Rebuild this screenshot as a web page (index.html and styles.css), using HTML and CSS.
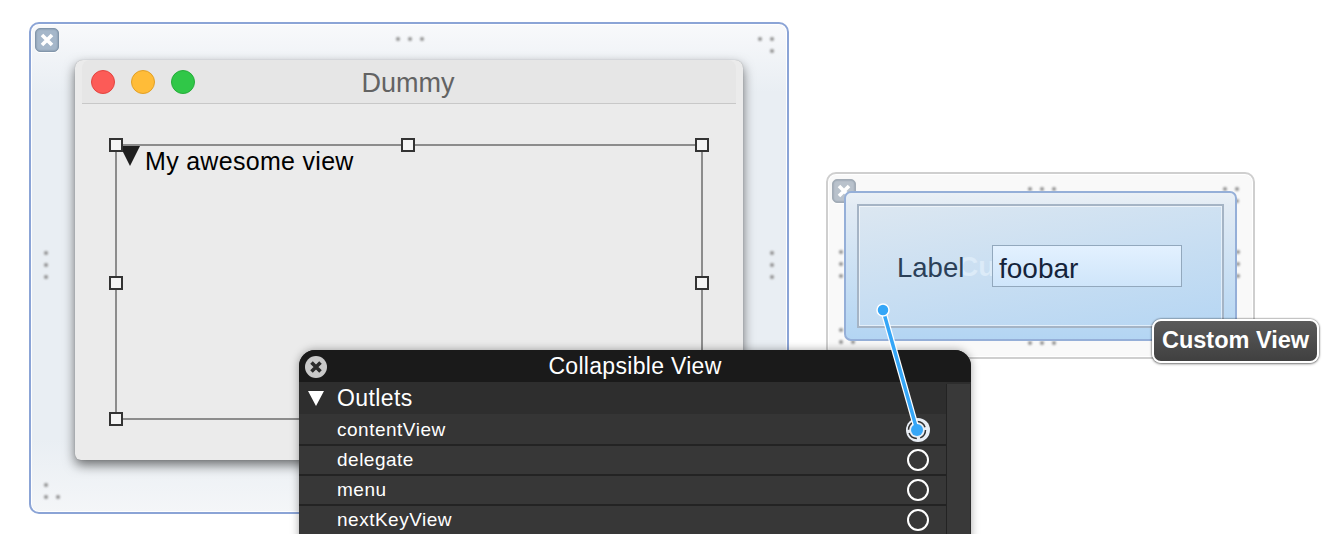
FILE: index.html
```html
<!DOCTYPE html>
<html lang="en">
<head>
  <meta charset="UTF-8">
  <title>Collapsible View - Interface Builder</title>
  <link rel="stylesheet" href="styles.css">
</head>
<body>
  <div class="canvas">

    <!-- main object frame -->
    <div class="frame frame-main">
      <svg class="grips grips-main" width="758" height="490" viewBox="0 0 758 490">
        <circle cx="368" cy="15" r="2"/><circle cx="380" cy="15" r="2"/><circle cx="392" cy="15" r="2"/>
        <circle cx="730" cy="15" r="2"/><circle cx="742" cy="15" r="2"/><circle cx="742" cy="27" r="2"/>
        <circle cx="16" cy="229" r="2"/><circle cx="16" cy="241" r="2"/><circle cx="16" cy="253" r="2"/>
        <circle cx="742" cy="229" r="2"/><circle cx="742" cy="241" r="2"/><circle cx="742" cy="253" r="2"/>
        <circle cx="16" cy="461" r="2"/><circle cx="16" cy="473" r="2"/><circle cx="28" cy="473" r="2"/>
      </svg>
      <div class="close-box close-main">
        <svg width="16" height="16" viewBox="0 0 16 16"><path d="M3 3l10 10M13 3l-10 10"/></svg>
      </div>

      <div class="window">
        <div class="titlebar">
          <span class="light light-red"></span>
          <span class="light light-yellow"></span>
          <span class="light light-green"></span>
          <span class="window-title">Dummy</span>
        </div>
        <div class="selection">
          <span class="handle h-tl"></span>
          <span class="handle h-tc"></span>
          <span class="handle h-tr"></span>
          <span class="handle h-ml"></span>
          <span class="handle h-mr"></span>
          <span class="handle h-bl"></span>
          <span class="handle h-bc"></span>
          <span class="handle h-br"></span>
          <div class="disclosure">
            <span class="triangle"></span>
            <span class="disclosure-text">My awesome view</span>
          </div>
        </div>
      </div>
    </div>

    <!-- custom view frame -->
    <div class="frame frame-custom">
      <svg class="grips grips-custom" width="427" height="185" viewBox="0 0 427 185">
        <circle cx="203" cy="16" r="2"/><circle cx="215" cy="16" r="2"/><circle cx="227" cy="16" r="2"/>
        <circle cx="398" cy="16" r="2"/><circle cx="410" cy="16" r="2"/><circle cx="410" cy="28" r="2"/>
        <circle cx="14" cy="79" r="2"/><circle cx="14" cy="91" r="2"/><circle cx="14" cy="103" r="2"/>
        <circle cx="411" cy="79" r="2"/><circle cx="411" cy="91" r="2"/><circle cx="411" cy="103" r="2"/>
        <circle cx="14" cy="157" r="2"/><circle cx="14" cy="169" r="2"/><circle cx="26" cy="169" r="2"/>
        <circle cx="203" cy="170" r="2"/><circle cx="215" cy="170" r="2"/><circle cx="227" cy="170" r="2"/>
      </svg>
      <div class="close-box close-custom">
        <svg width="16" height="16" viewBox="0 0 16 16"><path d="M3 3l10 10M13 3l-10 10"/></svg>
      </div>
      <div class="drag-frame">
        <div class="custom-view">
          <span class="ghost-text">Custom</span>
          <span class="custom-label">Label</span>
          <span class="custom-field">foobar</span>
        </div>
      </div>
    </div>

    <div class="tooltip">Custom View</div>

    <!-- outlets panel -->
    <div class="hud">
      <div class="hud-title">
        <span class="hud-close">
          <svg width="14" height="14" viewBox="0 0 14 14"><path d="M2.5 2.5l9 9M11.5 2.5l-9 9"/></svg>
        </span>
        Collapsible View
      </div>
      <div class="hud-body">
        <div class="hud-list">
          <div class="hud-group"><span class="triangle triangle-white"></span>Outlets</div>
          <div class="hud-row hud-row-first"><span>contentView</span><span class="socket socket-on"></span></div>
          <div class="hud-row"><span>delegate</span><span class="socket"></span></div>
          <div class="hud-row"><span>menu</span><span class="socket"></span></div>
          <div class="hud-row"><span>nextKeyView</span><span class="socket"></span></div>
        </div>
        <div class="hud-scroll"></div>
      </div>
    </div>

    <!-- connection wire, from the custom view to the outlet -->
    <svg class="wire" width="1322" height="534" viewBox="0 0 1322 534">
      <circle class="wire-ring" cx="917" cy="430" r="8.5"/>
      <line class="wire-edge" x1="883" y1="310" x2="917" y2="430"/>
      <line class="wire-core" x1="883" y1="310" x2="917" y2="430"/>
      <circle class="wire-start" cx="883" cy="310" r="6"/>
      <circle class="wire-end" cx="917" cy="430" r="6"/>
    </svg>

  </div>
</body>
</html>
```

FILE: styles.css
```css
html, body { margin: 0; padding: 0; background: #fff; }
body { font-family: "Liberation Sans", Arial, sans-serif; }
.canvas { position: relative; width: 1322px; height: 534px; overflow: hidden; background: #fff; }

/* object frames on the canvas */
.frame { position: absolute; box-sizing: border-box; border-radius: 10px; }
.frame-main { left: 29px; top: 22px; width: 760px; height: 492px; border: 2px solid #8ba4d6; background: linear-gradient(180deg, #f8f9fb 0, #e9eef3 14%, #e9eef3 85%, #f4f6f8 100%); box-shadow: inset 0 0 0 1px #fff; }
.frame-custom { left: 826px; top: 172px; width: 429px; height: 187px; border: 2px solid #cfcfcf; background: #f9f9f9; box-shadow: inset 0 0 0 1px #fff; }
.grips { position: absolute; filter: blur(0.8px); }
.grips-main { left: -1px; top: 0; }
.grips-custom { left: -1px; top: -1px; }
.grips circle { fill: #8f8f8f; }

.close-box { position: absolute; box-sizing: border-box; width: 24px; height: 24px; border-radius: 5px; border: 1px solid #8296ab; background: #a5b7ca; box-shadow: inset 0 0 2px rgba(70,90,110,0.6), 0 1px 0 #fff; display: flex; align-items: center; justify-content: center; }
.close-box path { stroke: #fff; stroke-width: 3.6; fill: none; }
.close-main { left: 4px; top: 4px; }
.close-custom { left: 4px; top: 5px; background: #b9c2cc; border-color: #a3acb6; }

/* the dummy window */
.window { position: absolute; left: 44px; top: 36px; width: 668px; height: 400px; background: #ebebeb; border-radius: 8px 8px 6px 6px; box-shadow: 0 5px 12px rgba(0,0,0,0.55), 0 0 1px rgba(0,0,0,0.3); }
.titlebar { position: relative; display: flex; align-items: center; gap: 16px; box-sizing: border-box; height: 44px; padding: 0 0 0 9px; margin: 0 7px; background: #e6e6e6; border-bottom: 1px solid #c8c8c8; border-radius: 8px 8px 0 0; }
.light { box-sizing: border-box; width: 24px; height: 24px; border-radius: 50%; border: 1px solid; }
.light-red { background: #fc5b57; border-color: #e3443f; }
.light-yellow { background: #ffbc38; border-color: #e2a026; }
.light-green { background: #30c748; border-color: #26ad3a; }
.window-title { position: absolute; left: -2px; right: 0; top: 7px; text-align: center; font-size: 27px; line-height: 32px; color: #636363; }

.selection { position: absolute; box-sizing: border-box; left: 40px; top: 84px; width: 588px; height: 276px; border: 2px solid #8c8c8c; }
.handle { position: absolute; box-sizing: border-box; width: 14px; height: 14px; border: 2px solid #333; background: #f4f4f4; }
.h-tl { left: -8px; top: -8px; }
.h-tc { left: 284px; top: -8px; }
.h-tr { right: -8px; top: -8px; }
.h-ml { left: -8px; top: 130px; }
.h-mr { right: -8px; top: 130px; }
.h-bl { left: -8px; bottom: -8px; }
.h-bc { left: 284px; bottom: -8px; }
.h-br { right: -8px; bottom: -8px; }

.disclosure { display: flex; align-items: flex-start; gap: 5px; padding-left: 3px; }
.triangle { display: inline-block; width: 0; height: 0; border-left: 10px solid transparent; border-right: 10px solid transparent; border-top: 20px solid #1f1f1f; }
.disclosure-text { font-size: 25px; letter-spacing: 0.3px; line-height: 30px; color: #000; }

/* the custom view being dragged */
.drag-frame { position: absolute; box-sizing: border-box; left: 16px; top: 17px; width: 393px; height: 150px; padding: 11px; border: 2px solid #95afd8; border-radius: 7px; background: linear-gradient(180deg, #eaf0f6, #e2ebf4 9%, #b3d5f3 100%); }
.custom-view { position: relative; display: flex; align-items: center; box-sizing: border-box; height: 124px; padding-left: 38px; border: 2px solid #a5b4c5; box-shadow: inset 0 0 0 1px rgba(255,255,255,0.55); background: linear-gradient(170deg, #dce7f1, #b6d6f3); }
.custom-label { position: relative; margin-top: 3px; font-size: 27.5px; color: #2b4058; width: 95px; }
.ghost-text { position: absolute; left: 99px; top: 45px; font-size: 28px; font-weight: bold; color: #dcebf8; }
.custom-field { position: relative; box-sizing: border-box; width: 190px; height: 42px; line-height: 46px; padding-left: 6px; font-size: 28px; color: #15233a; border: 1px solid #92a8bd; background: linear-gradient(180deg, #e3f1ff, #cfe5fa); }

.tooltip { position: absolute; left: 1152px; top: 319px; box-sizing: border-box; width: 167px; height: 44px; border: 2px solid #fff; border-radius: 9px; background: linear-gradient(180deg, #5a5a5a, #404040); box-shadow: 0 0 2px rgba(0,0,0,0.7), 0 1px 3px rgba(0,0,0,0.4); color: #fff; font-size: 23.5px; font-weight: bold; line-height: 38px; text-align: center; }

/* outlets panel */
.hud { position: absolute; left: 299px; top: 350px; width: 672px; height: 200px; border-radius: 16px 16px 0 0; background: rgba(36,36,36,0.96); box-shadow: 0 0 8px rgba(0,0,0,0.35); color: #fff; }
.hud-title { position: relative; height: 32px; line-height: 32px; text-align: center; font-size: 23px; letter-spacing: 0.3px; background: rgba(26,26,26,0.97); border-radius: 16px 16px 0 0; }
.hud-close { position: absolute; left: 6px; top: 6px; width: 22px; height: 22px; border-radius: 50%; background: #c9c9c9; display: flex; align-items: center; justify-content: center; }
.hud-close path { stroke: #2a2a2a; stroke-width: 3.6; fill: none; }
.hud-body { display: flex; align-items: stretch; }
.hud-list { width: 647px; }
.hud-group { display: flex; align-items: center; gap: 13px; height: 32px; padding-left: 9px; font-size: 23px; letter-spacing: 0.4px; background: rgba(46,46,46,0.97); }
.triangle-white { border-left-width: 8.5px; border-right-width: 8.5px; border-top: 15px solid #fff; }
.hud-row { display: flex; align-items: center; justify-content: space-between; box-sizing: border-box; height: 30px; padding: 0 17px 0 38px; font-size: 19px; letter-spacing: 0.5px; background: rgba(56,56,56,0.97); border-bottom: 2px solid #232323; }
.hud-row-first { height: 32px; padding-top: 2px; background: rgba(54,54,54,0.97); }
.socket { box-sizing: border-box; width: 22px; height: 22px; border: 2px solid #fff; border-radius: 50%; }
.socket-on { width: 24px; height: 24px; margin-right: -1px; border: none; background: #e9eef5; }
.hud-scroll { flex: 1; margin: 2px 1px 0 0; border-left: 1px solid #232323; background: rgba(58,58,58,0.97); }

.wire { position: absolute; left: 0; top: 0; }
.wire-ring { fill: none; stroke: #333; stroke-width: 1.5; stroke-dasharray: 10 3.4; }
.wire-edge { stroke: #fff; stroke-width: 6; }
.wire-core { stroke: #35a6f7; stroke-width: 3.5; }
.wire-start { fill: #35a6f7; stroke: #fff; stroke-width: 1.5; }
.wire-end { fill: #35a6f7; }
```
